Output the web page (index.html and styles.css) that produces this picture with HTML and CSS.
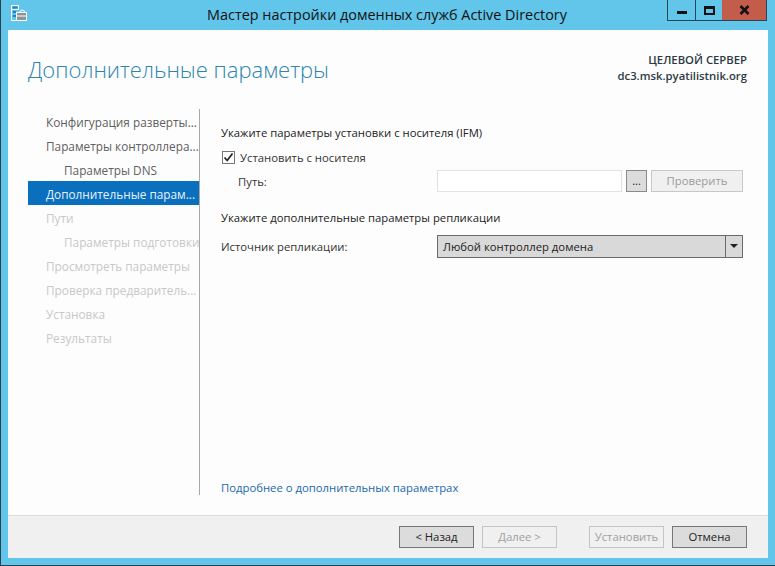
FILE: index.html
```html
<!DOCTYPE html>
<html lang="ru">
<head>
<meta charset="utf-8">
<title>Мастер настройки доменных служб Active Directory</title>
<link rel="stylesheet" href="styles.css">
</head>
<body>
<div class="window">
  <header class="titlebar">
    <svg class="app-icon" width="17" height="17" viewBox="0 0 17 17">
      <path d="M1.5 .5H8.5V4.5H1.5V.5M1.5 4.5V15.5H6" fill="none" stroke="#fff"/>
      <path d="M2.5 1.5H7.5V3.5H2.5Z" fill="#2a7fc4"/>
      <path d="M3 6h3v2H3zM3 10h3v2H3z" fill="#2a7fc4"/>
      <path d="M9.5 6.5L12 5L15 6.5" fill="none" stroke="#fff"/>
      <rect x="6.5" y="7.5" width="10" height="8" fill="#8a949c" stroke="#fff"/>
      <path d="M7 11H16" stroke="#fff"/>
    </svg>
    <h1 class="window-title">Мастер настройки доменных служб Active Directory</h1>
    <div class="controls">
      <div class="ctl ctl-min"><span class="min-glyph"></span></div>
      <div class="ctl ctl-max"><span class="max-glyph"></span></div>
      <div class="ctl ctl-close">
        <svg width="11" height="10" viewBox="0 0 11 10"><path d="M1.5 1L9.5 9M9.5 1L1.5 9" stroke="#111" stroke-width="2.6" fill="none"/></svg>
      </div>
    </div>
  </header>
  <div class="client">
    <div class="page">
      <div class="page-head">
        <h2 class="page-title">Дополнительные параметры</h2>
        <div class="server">
          <div>ЦЕЛЕВОЙ СЕРВЕР</div>
          <div>dc3.msk.pyatilistnik.org</div>
        </div>
      </div>
      <div class="page-body">
        <nav class="steps">
          <div class="step">Конфигурация разверты...</div>
          <div class="step">Параметры контроллера...</div>
          <div class="step sub">Параметры DNS</div>
          <div class="step active">Дополнительные парам...</div>
          <div class="step off">Пути</div>
          <div class="step sub off">Параметры подготовки</div>
          <div class="step off">Просмотреть параметры</div>
          <div class="step off">Проверка предваритель...</div>
          <div class="step off">Установка</div>
          <div class="step off">Результаты</div>
        </nav>
        <main class="content">
          <div class="form">
            <p class="section">Укажите параметры установки с носителя (IFM)</p>
            <label class="check-row">
              <span class="checkbox">
                <svg width="11" height="11" viewBox="0 0 11 11"><path d="M1.5 5.5L4.2 8.5L9.5 1.5" fill="none" stroke="#222" stroke-width="1.7"/></svg>
              </span>
              Установить с носителя
            </label>
            <div class="path-row">
              <span class="path-label">Путь:</span>
              <div class="path-input"></div>
              <div class="browse">...</div>
              <div class="verify">Проверить</div>
            </div>
            <p class="section section-2">Укажите дополнительные параметры репликации</p>
            <div class="source-row">
              <span class="source-label">Источник репликации:</span>
              <div class="select">
                <span class="select-value">Любой контроллер домена</span>
                <span class="select-arrow"></span>
              </div>
            </div>
          </div>
          <a class="more" href="#">Подробнее о дополнительных параметрах</a>
        </main>
      </div>
    </div>
    <footer class="footer">
      <div class="btn">&lt; Назад</div>
      <div class="btn disabled next">Далее &gt;</div>
      <div class="btn disabled install">Установить</div>
      <div class="btn cancel">Отмена</div>
    </footer>
  </div>
</div>
</body>
</html>
```
FILE: styles.css
```css
* { box-sizing: border-box; }
html, body { margin: 0; padding: 0; }
body {
  width: 775px;
  height: 566px;
  overflow: hidden;
  font-family: "Open Sans", "Noto Sans", sans-serif;
  font-size: 11.3px;
  color: #222;
}
.window {
  width: 775px;
  height: 566px;
  display: flex;
  flex-direction: column;
  background: #62c6ea;
  border-left: 1px solid #28404f;
  border-bottom: 1px solid #28404f;
  padding: 0 7px 7px 7px;
}
.titlebar {
  height: 30px;
  flex: none;
  display: flex;
  align-items: flex-start;
  position: relative;
}
.app-icon { margin: 5px 0 0 2px; flex: none; }
.window-title {
  position: absolute;
  left: 0;
  right: 0;
  top: 6px;
  margin: 0;
  padding-right: 2px;
  text-align: center;
  font-size: 14.4px;
  line-height: 18px;
  font-weight: 400;
  color: #111;
}
.controls {
  position: absolute;
  right: 1px;
  top: 0;
  display: flex;
  height: 21px;
  border: 1px solid #2a4655;
  border-top: 0;
}
.ctl {
  display: flex;
  align-items: center;
  justify-content: center;
  height: 20px;
}
.ctl-min { width: 28px; border-right: 1px solid #2a4655; }
.ctl-max { width: 26px; }
.ctl-close { width: 44px; background: #c45c4c; }
.min-glyph { width: 10px; height: 3px; background: #111; margin-top: 5px; }
.max-glyph { width: 11px; height: 9px; border: 2px solid #111; border-top-width: 3px; }
.client {
  flex: 1;
  display: flex;
  flex-direction: column;
  background: #fff;
}
.page {
  flex: 1;
  min-height: 0;
  display: flex;
  flex-direction: column;
  background: #fdfdfd;
}
.page-head {
  height: 79px;
  flex: none;
  display: flex;
  justify-content: space-between;
  padding: 0 21px 0 20px;
}
.page-title {
  margin: 22px 0 0 0;
  font-size: 22px;
  line-height: 34px;
  font-weight: 300;
  color: #2b85ad;
}
.server {
  margin-top: 22px;
  text-align: right;
  font-size: 11.3px;
  line-height: 16px;
  font-weight: 600;
  color: #2c3a45;
}
.page-body {
  height: 386px;
  flex: none;
  display: flex;
}
.steps {
  width: 192px;
  flex: none;
  padding-left: 20px;
  border-right: 1px solid #a8a8a8;
  overflow: hidden;
}
.step {
  height: 24px;
  line-height: 26px;
  padding-left: 18px;
  white-space: nowrap;
  overflow: hidden;
  font-size: 11.8px;
  color: #5f5f5f;
}
.step.sub { padding-left: 36px; }
.step.active { background: #0a6fbd; color: #e8f2fa; }
.step.off { color: #c8c8c8; }
.content {
  flex: 1;
  min-width: 0;
  display: flex;
  flex-direction: column;
  justify-content: space-between;
  padding: 0 24px 0 21px;
  color: #222;
}
.form { display: flex; flex-direction: column; }
.section { margin: 15px 0 0 0; line-height: 18px; }
.section-2 { margin-top: 17px; }
.check-row {
  display: flex;
  align-items: center;
  gap: 5px;
  margin: 6px 0 0 1px;
  height: 18px;
  color: #333;
}
.checkbox {
  width: 13px;
  height: 13px;
  border: 1px solid #777;
  background: #fff;
  display: flex;
  align-items: center;
  justify-content: center;
}
.path-row {
  display: flex;
  align-items: center;
  margin-top: 4px;
  height: 22px;
}
.path-label { width: 216px; padding-left: 17px; color: #333; }
.path-input {
  width: 185px;
  height: 22px;
  border: 1px solid #e2e2e2;
  background: #fff;
}
.browse {
  width: 21px;
  height: 22px;
  margin-left: 4px;
  border: 1px solid #8a8a8a;
  background: #dcdcdc;
  text-align: center;
  line-height: 20px;
  font-size: 11px;
}
.verify {
  width: 92px;
  height: 22px;
  margin-left: 4px;
  border: 1px solid #c8c8c8;
  background: #f0f0f0;
  text-align: center;
  line-height: 20px;
  color: #9a9a9a;
}
.source-row {
  display: flex;
  align-items: center;
  margin-top: 8px;
  height: 23px;
}
.source-label { width: 216px; color: #333; }
.select {
  width: 306px;
  height: 23px;
  display: flex;
  border: 1px solid #6a6a6a;
  background: #d9d9d9;
}
.select-value { flex: 1; padding-left: 5px; line-height: 21px; }
.select-arrow {
  width: 17px;
  border-left: 1px solid #6a6a6a;
  position: relative;
}
.select-arrow::after {
  content: "";
  position: absolute;
  left: 4px;
  top: 8px;
  border: 4px solid transparent;
  border-top: 4px solid #222;
  border-bottom: 0;
}
.more {
  margin-bottom: -2px;
  line-height: 18px;
  color: #1a68ae;
  text-decoration: none;
}
.footer {
  height: 43px;
  flex: none;
  display: flex;
  align-items: flex-start;
  padding: 10px 20px 0 391px;
  background: #f0f0f0;
  border-top: 1px solid #dcdcdc;
}
.btn {
  width: 75px;
  height: 22px;
  border: 1px solid #777;
  background: #dcdcdc;
  text-align: center;
  line-height: 20px;
  color: #222;
}
.btn.disabled {
  border-color: #c4c4c4;
  background: #f0f0f0;
  color: #a0a0a0;
}
.next { margin-left: 8px; }
.install { margin-left: 32px; }
.cancel { margin-left: 8px; }
```
